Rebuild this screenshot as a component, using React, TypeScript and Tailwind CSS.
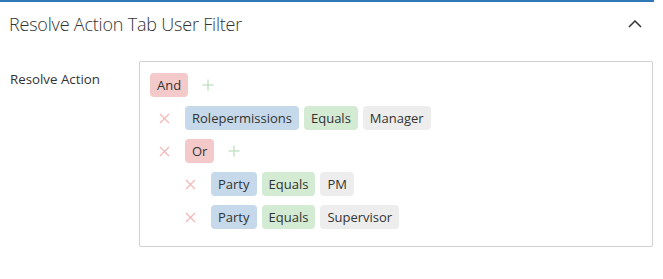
import React from 'react';

type Node =
  | { kind: 'group'; op: string; children: Node[] }
  | { kind: 'rule'; field: string; cmp: string; value: string };

const FILTER: Node = {
  kind: 'group',
  op: 'And',
  children: [
    { kind: 'rule', field: 'Rolepermissions', cmp: 'Equals', value: 'Manager' },
    {
      kind: 'group',
      op: 'Or',
      children: [
        { kind: 'rule', field: 'Party', cmp: 'Equals', value: 'PM' },
        { kind: 'rule', field: 'Party', cmp: 'Equals', value: 'Supervisor' },
      ],
    },
  ],
};

function RemoveIcon() {
  return (
    <svg width="11" height="11" viewBox="0 0 11 11" className="shrink-0">
      <path d="M1 1 L10 10 M10 1 L1 10" stroke="#f2b8b8" strokeWidth="1.3" fill="none" />
    </svg>
  );
}

function AddIcon() {
  return (
    <svg width="12" height="12" viewBox="0 0 12 12" className="shrink-0">
      <path d="M6 0.5 V11.5 M0.5 6 H11.5" stroke="#c6e3c6" strokeWidth="1.5" fill="none" />
    </svg>
  );
}

function Chip({ tone, children }: { tone: 'op' | 'field' | 'cmp' | 'value'; children: React.ReactNode }) {
  const colors = {
    op: 'bg-[#f4c9ca]',
    field: 'bg-[#c5d9ea]',
    cmp: 'bg-[#d3ead3]',
    value: 'bg-[#ededed]',
  };
  return (
    <span className={`h-6 px-[7px] rounded-[4px] flex items-center text-[13px] text-[#333] leading-none ${colors[tone]}`}>
      {children}
    </span>
  );
}

function Rows({ node, removable }: { node: Node; removable: boolean }) {
  if (node.kind === 'rule') {
    return (
      <div className="flex items-center h-6">
        {removable && <span className="w-[26px] flex"><RemoveIcon /></span>}
        <div className="flex items-center gap-[5px]">
          <Chip tone="field">{node.field}</Chip>
          <Chip tone="cmp">{node.cmp}</Chip>
          <Chip tone="value">{node.value}</Chip>
        </div>
      </div>
    );
  }
  return (
    <div className="flex flex-col gap-[9px]">
      <div className="flex items-center h-6">
        {removable && <span className="w-[26px] flex"><RemoveIcon /></span>}
        <Chip tone="op">{node.op}</Chip>
        <span className="ml-[14px] flex"><AddIcon /></span>
      </div>
      <div className={`flex flex-col gap-[9px] ${removable ? 'pl-[26px]' : 'pl-[9px]'}`}>
        {node.children.map((c, i) => (
          <Rows key={i} node={c} removable />
        ))}
      </div>
    </div>
  );
}

export default function App() {
  return (
    <div className="w-[654px] bg-white border-t-2 border-[#2f78b8] font-['Open_Sans','Noto_Sans',sans-serif] text-[#333]">
      <div className="flex items-center justify-between pl-[9px] pr-[12px] h-[44px]">
        <span className="text-[18px] font-light tracking-[-0.2px]">Resolve Action Tab User Filter</span>
        <svg width="14" height="8" viewBox="0 0 14 8">
          <path d="M1 7 L7 1 L13 7" stroke="#333" strokeWidth="1.5" fill="none" />
        </svg>
      </div>
      <div className="flex mt-[15px]">
        <div className="w-[139px] pl-[10px] pt-[9px] text-[13.3px]">Resolve Action</div>
        <div className="w-[514px] border border-[#d0d0d0] rounded-[2px] pt-[11px] pl-[10px] pb-[17px]">
          <Rows node={FILTER} removable={false} />
        </div>
      </div>
    </div>
  );
}
